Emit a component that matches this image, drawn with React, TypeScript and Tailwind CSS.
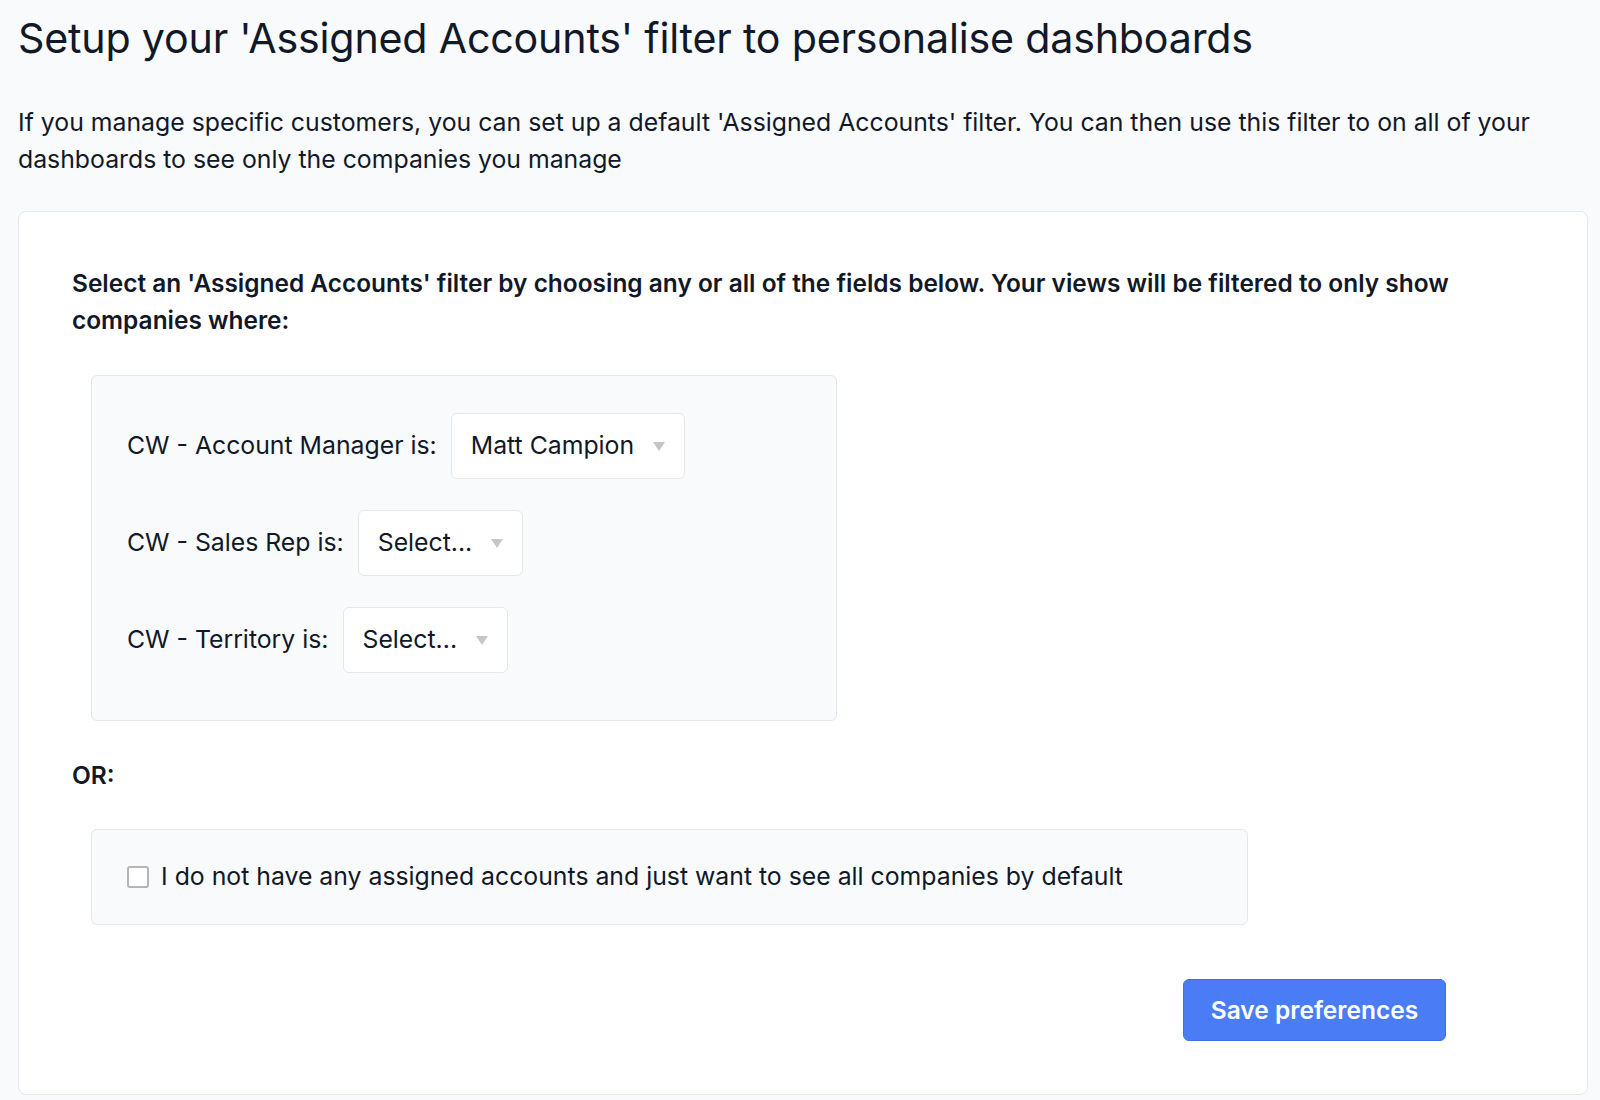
import React, { useState } from "react";

const FONT = { fontFamily: "Inter, 'Noto Sans', sans-serif" };

interface FilterSelectProps {
  value?: string;
  placeholder?: string;
}

const Caret = () => (
  <svg width="12" height="9" viewBox="0 0 12 9" className="shrink-0">
    <path d="M0 0 L12 0 L6 9 Z" fill="#c6c6c6" />
  </svg>
);

const FilterSelect: React.FC<FilterSelectProps> = ({ value, placeholder = "Select..." }) => (
  <button
    type="button"
    className="flex h-[66px] items-center gap-[19px] rounded-md border border-gray-200 bg-white pl-[19px] pr-[19px] text-[24.8px] text-[#111827]"
  >
    <span>{value ?? placeholder}</span>
    <Caret />
  </button>
);

const FilterRow = ({ label, value }: { label: string; value?: string }) => (
  <div className="flex items-center gap-[14px]">
    <span className="text-[24.8px] text-[#111827]">{label}</span>
    <FilterSelect value={value} />
  </div>
);

export default function App() {
  const [showAll, setShowAll] = useState(false);

  return (
    <div style={FONT} className="min-h-screen bg-[#f8fafc] pl-[18px] pr-[12px] pt-[10px] pb-[4px] text-[#111827]">
      <h1 className="text-[41.2px] font-normal leading-[56px] tracking-[-0.2px]">
        Setup your 'Assigned Accounts' filter to personalise dashboards
      </h1>
      <p className="mt-[38px] text-[24.8px] leading-[37px]">
        If you manage specific customers, you can set up a default 'Assigned Accounts' filter. You can then use this
        filter to on all of your dashboards to see only the companies you manage
      </p>

      <div className="mt-[33px] rounded-lg border border-gray-200 bg-white p-[53px]">
        <div className="flex flex-col">
          <p className="max-w-[1420px] text-[24.45px] font-semibold leading-[37px]">
            Select an 'Assigned Accounts' filter by choosing any or all of the fields below. Your views will be
            filtered to only show companies where:
          </p>

          <div className="ml-[19px] mt-[36px] flex w-[746px] flex-col gap-[31px] rounded-md border border-gray-200 bg-[#f8fafc] pl-[35px] pt-[37px] pb-[47px]">
            <FilterRow label="CW - Account Manager is:" value="Matt Campion" />
            <FilterRow label="CW - Sales Rep is:" />
            <FilterRow label="CW - Territory is:" />
          </div>

          <p className="mt-[36px] text-[24.5px] font-semibold leading-[37px]">OR:</p>

          <label className="ml-[19px] mt-[35px] flex h-[96px] w-[1157px] cursor-pointer items-center gap-[12px] rounded-md border border-gray-200 bg-[#f8fafc] pl-[35px]">
            <input
              type="checkbox"
              checked={showAll}
              onChange={(e) => setShowAll(e.target.checked)}
              className="h-[22px] w-[22px] appearance-none rounded-[3px] border-2 border-[#b5b5b5] bg-white checked:bg-[#4a7cf6]"
            />
            <span className="text-[24.8px]">
              I do not have any assigned accounts and just want to see all companies by default
            </span>
          </label>

          <button
            type="button"
            className="mr-[88px] mt-[54px] h-[62px] w-[263px] self-end rounded-md border border-[#3f6fe8] bg-[#4a7cf6] text-[24.5px] font-semibold text-white"
          >
            Save preferences
          </button>
        </div>
      </div>
    </div>
  );
}
